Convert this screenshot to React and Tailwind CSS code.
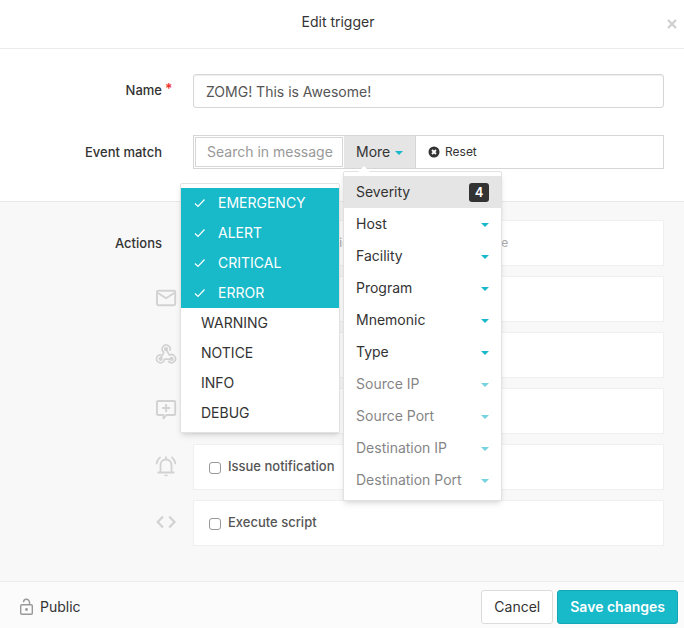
import { useState } from "react";

const SEVERITIES = [
  { name: "EMERGENCY", on: true },
  { name: "ALERT", on: true },
  { name: "CRITICAL", on: true },
  { name: "ERROR", on: true },
  { name: "WARNING", on: false },
  { name: "NOTICE", on: false },
  { name: "INFO", on: false },
  { name: "DEBUG", on: false },
];

const FILTERS = [
  { name: "Host" },
  { name: "Facility" },
  { name: "Program" },
  { name: "Mnemonic" },
  { name: "Type" },
  { name: "Source IP", disabled: true },
  { name: "Source Port", disabled: true },
  { name: "Destination IP", disabled: true },
  { name: "Destination Port", disabled: true },
];

function Caret() {
  return (
    <svg className="mt-0.5 h-1 w-2 shrink-0 fill-[#18b9c9]" viewBox="0 0 8 4" aria-hidden="true">
      <path d="M0 0h8L4 4z" />
    </svg>
  );
}

function MailIcon() {
  return (
    <svg className="size-6 fill-none stroke-[#d2d2d2]" viewBox="0 0 24 24" strokeWidth="1.900" strokeLinejoin="round" aria-hidden="true">
      <rect x="3" y="4.700" width="18.200" height="14.600" rx="1.200" />
      <path d="M4 7l8.100 5.200L20.200 7" />
    </svg>
  );
}

function WebhookIcon() {
  return (
    <svg className="size-6 fill-none stroke-[#d2d2d2]" viewBox="0 0 24 24" strokeWidth="1.700" strokeLinecap="round" strokeLinejoin="round" aria-hidden="true">
      <path d="M16 8.300a4 4 0 1 0-6.200 2L7 15.500" />
      <path d="M6.500 12.800a4 4 0 1 0 4 4.400H17" />
      <path d="M12.200 7.300l3.200 5.900a4 4 0 1 1-.9 6.200" />
      <circle cx="12.100" cy="7.200" r="1.300" className="fill-[#d2d2d2]" />
      <circle cx="6.700" cy="16.900" r="1.200" className="fill-[#d2d2d2]" />
      <circle cx="17.500" cy="16.900" r="1.200" className="fill-[#d2d2d2]" />
    </svg>
  );
}

function CommentIcon() {
  return (
    <svg className="size-6 fill-none stroke-[#d2d2d2]" viewBox="0 0 24 24" strokeWidth="1.900" strokeLinejoin="round" aria-hidden="true">
      <path d="M4 3h16.200q1 0 1 1v12q0 1-1 1h-7.800L9.500 20.500V17H4q-1 0-1-1V4q0-1 1-1zM12.100 6v8M8.100 10h8" />
    </svg>
  );
}

function BellIcon() {
  return (
    <svg className="size-6 fill-none stroke-[#d2d2d2]" viewBox="0 0 24 24" strokeWidth="1.800" aria-hidden="true">
      <path d="M3.500 18.500h17M6.500 18v-6.500c0-3.500 2.200-6 5.500-6s5.500 2.500 5.500 6V18M12 5.500V2.500" />
      <path d="M2.600 10.300C2.800 7.300 4.200 4.800 6.600 3M21.400 10.300c-.2-3-1.600-5.500-4-7.300" />
      <path className="fill-[#d2d2d2] stroke-none" d="M10 20.700h4a2 1.600 0 0 1-4 0z" />
    </svg>
  );
}

function CodeIcon() {
  return (
    <svg className="size-6 fill-none stroke-[#d2d2d2]" viewBox="0 0 24 24" strokeWidth="2.200" aria-hidden="true">
      <path d="M9 6.500L3.700 12 9 17.500M15.200 6.500l5.300 5.500-5.300 5.500" />
    </svg>
  );
}

const ACTIONS = [
  { id: "email", Icon: MailIcon },
  { id: "webhook", Icon: WebhookIcon },
  { id: "comment", Icon: CommentIcon },
  { id: "notification", label: "Issue notification", Icon: BellIcon },
  { id: "script", label: "Execute script", Icon: CodeIcon },
];

function SeverityMenu() {
  const [levels, setLevels] = useState(SEVERITIES);
  const toggle = (name) =>
    setLevels(levels.map((l) => (l.name === name ? { ...l, on: !l.on } : l)));
  return (
    <ul className="absolute top-[11px] right-full mr-1 w-40 rounded-xs border border-[#e2e2e2] bg-white py-1 shadow-md">
      {levels.map((l) => (
        <li key={l.name}>
          <button
            type="button"
            onClick={() => toggle(l.name)}
            className={
              l.on
                ? "flex h-[30px] w-full items-center gap-3 bg-[#18b9c9] pl-[13px] text-white"
                : "flex h-[30px] w-full items-center pl-5"
            }
          >
            {l.on && (
              <svg className="size-3 fill-none stroke-white" viewBox="0 0 12 12" strokeWidth="1.200" aria-hidden="true">
                <path d="M1 6.500l3 3 6.500-7" />
              </svg>
            )}
            {l.name}
          </button>
        </li>
      ))}
    </ul>
  );
}

function MoreMenu() {
  return (
    <div className="absolute top-full -left-px z-10 mt-[3px] w-[159px] rounded-xs border border-[#e2e2e2] bg-white py-1 shadow-md">
      <svg className="absolute -top-1.5 left-3.5 h-1.5 w-3 fill-white" viewBox="0 0 12 6" aria-hidden="true">
        <path d="M0 6l6-6 6 6z" />
      </svg>
      <SeverityMenu />
      <ul>
        <li>
          <button type="button" className="flex h-8 w-full items-center justify-between bg-[#e5e5e5] px-3">
            Severity
            <span className="flex h-[19px] w-5 items-center justify-center rounded-[3px] bg-[#333] text-[13px] font-semibold text-white">4</span>
          </button>
        </li>
        {FILTERS.map((f) => (
          <li key={f.name}>
            <button
              type="button"
              disabled={f.disabled}
              className="flex h-8 w-full items-center justify-between px-3 disabled:opacity-60"
            >
              {f.name}
              <Caret />
            </button>
          </li>
        ))}
      </ul>
    </div>
  );
}

export default function App() {
  return (
    <form className="bg-white font-['Inter',sans-serif] text-sm text-[#333]" onSubmit={(e) => e.preventDefault()}>
      <header className="flex h-[49px] items-center border-b border-[#ebebeb] pr-[7px] pb-1 pl-[9px]">
        <h1 className="flex-1 text-center">Edit trigger</h1>
        <button type="button" aria-label="Close" className="pt-1">
          <svg className="size-2.5 stroke-[#cfcfcf]" viewBox="0 0 10 10" strokeWidth="2.200" aria-hidden="true">
            <path d="M1 1l8 8M9 1L1 9" />
          </svg>
        </button>
      </header>

      <section className="grid grid-cols-[162px_1fr] gap-x-[31px] gap-y-[27px] border-b border-[#e8e8e8] pt-[25px] pr-5 pb-8">
        <label htmlFor="name" className="relative self-center justify-self-end pb-0.5 text-[13px] font-medium">
          Name
          <span className="absolute top-0 left-full pl-[3px] text-sm leading-4 font-semibold text-[#f03030]">*</span>
        </label>
        <input
          id="name"
          type="text"
          defaultValue="ZOMG! This is Awesome!"
          className="h-[34px] w-full rounded-[3px] border border-[#d6d6d6] px-3 text-[#555] shadow-[inset_0_1px_1px_#00000013] outline-none"
        />
        <label htmlFor="search" className="self-center justify-self-end text-[13px] font-medium">Event match</label>
        <div className="flex h-[34px] border border-[#d6d6d6]">
          <input
            id="search"
            type="text"
            placeholder="Search in message"
            className="my-px ml-px w-[148px] border border-[#d6d6d6] pl-[11px] outline-none placeholder:text-[#999]"
          />
          <div className="relative ml-px flex">
            <button type="button" className="flex w-[72px] items-center gap-[5px] border-r border-[#d6d6d6] bg-[#e5e5e5] pl-3">
              More
              <Caret />
            </button>
            <MoreMenu />
          </div>
          <button type="button" className="ml-3 flex items-center gap-[5px] text-xs">
            <svg className="size-3" viewBox="0 0 12 12" aria-hidden="true">
              <circle cx="6" cy="6" r="5.500" className="fill-[#333]" />
              <path d="M4 4l4 4M8 4L4 8" className="stroke-white" strokeWidth="1.800" />
            </svg>
            Reset
          </button>
        </div>
      </section>

      <section className="grid grid-cols-[162px_1fr] gap-x-[31px] bg-[#f8f8f8] pt-[18px] pr-5 pb-[35px]">
        <h2 className="flex h-[46px] items-center justify-end text-[13px] font-medium">Actions</h2>
        <p className="flex h-[46px] items-center border border-[#f0f0f0] bg-white px-3 text-xs text-[#aaa]">
          Please select all the actions to take on each message
        </p>
        <ul className="col-span-2 grid gap-2.5 pt-2.5">
          {ACTIONS.map(({ id, label, Icon }) => (
            <li key={id} className="flex">
              <span className="flex w-[193px] shrink-0 items-center justify-end pr-[15px] pb-0.5">
                <Icon />
              </span>
              <label className="flex h-[46px] flex-1 items-center gap-[7px] border border-[#f0f0f0] bg-white px-[15px] pb-0.5 text-[13px] font-medium text-[#555]">
                <input
                  type="checkbox"
                  name={id}
                  aria-label={label ?? id}
                  className="mt-1 size-3 appearance-none rounded-[3px] border border-[#999] bg-white"
                />
                {label}
              </label>
            </li>
          ))}
        </ul>
      </section>

      <footer className="flex items-center gap-1 border-t border-[#ebebeb] bg-[#fbfbfb] pt-2 pr-1.5 pb-1 pl-[17px]">
        <span className="mr-auto flex items-center gap-[5px]">
          <svg className="size-[18px] fill-none stroke-[#999]" viewBox="0 0 18 18" strokeWidth="1.400" aria-hidden="true">
            <rect x="3.700" y="6.700" width="11.600" height="9.600" rx="1" />
            <path d="M12.500 6.700V4.300a3 3 0 0 0-6 0" />
            <circle cx="9.500" cy="11.500" r="1.400" className="fill-[#999] stroke-none" />
          </svg>
          Public
        </span>
        <button type="button" className="h-[34px] rounded-[3px] border border-[#dcdcdc] bg-white px-3">Cancel</button>
        <button type="submit" className="h-[34px] rounded-[3px] border border-[#14a7b5] bg-[#18b9c9] px-3 font-semibold text-white">Save changes</button>
      </footer>
    </form>
  );
}
